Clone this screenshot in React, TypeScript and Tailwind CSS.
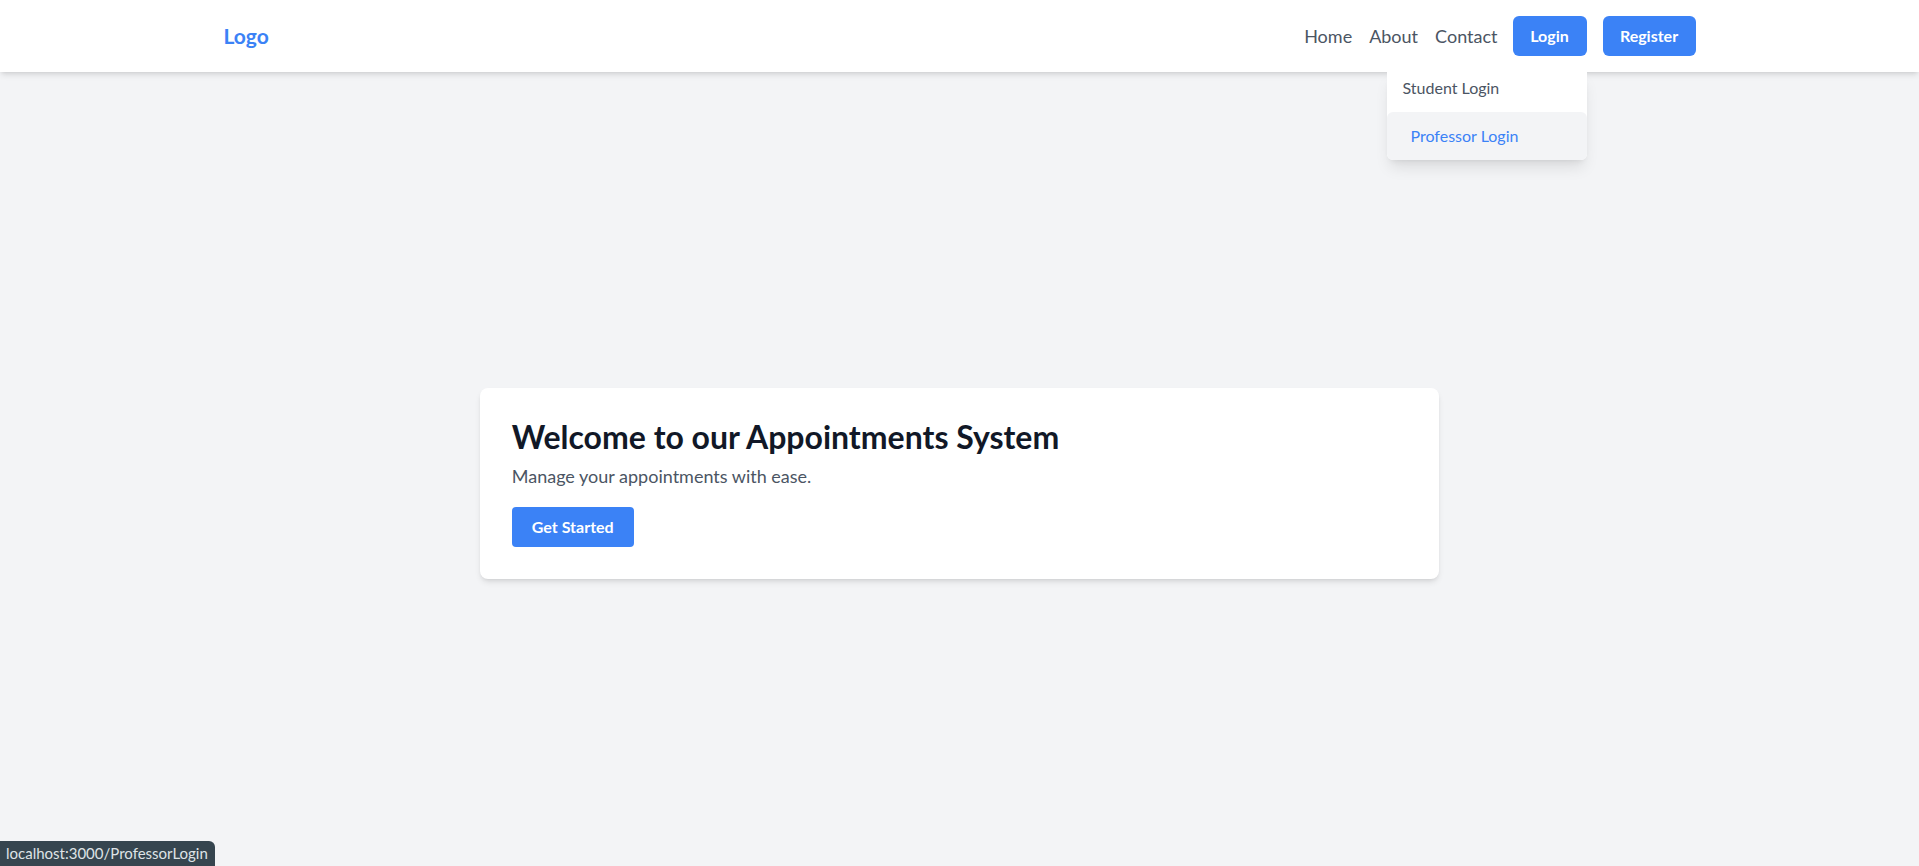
import React from "react";

const font = { fontFamily: "Lato, 'Noto Sans', sans-serif" };

function Header() {
  return (
    <header className="bg-white shadow-md relative z-10">
      <div className="container mx-auto px-8 py-4 flex items-center justify-between">
        <a href="#" className="text-[21px] font-bold text-[#3b82f6] leading-10">
          Logo
        </a>
        <nav className="flex items-center">
          <a href="#" className="text-lg text-[#4b5563] mr-[17px]">Home</a>
          <a href="#" className="text-lg text-[#4b5563] mr-[17px]">About</a>
          <a href="#" className="text-lg text-[#4b5563] mr-[15px]">Contact</a>
          <div className="relative">
            <button className="h-10 w-[74px] rounded-md bg-[#3b82f6] text-white font-bold text-base">
              Login
            </button>
            <div className="absolute right-0 top-[56px] w-[200px] bg-white rounded-b-md shadow-lg">
              <a href="#" className="block px-4 pt-[4px] pb-[12px] text-base leading-6 text-[#4b5563]">
                Student Login
              </a>
              <a href="#" className="block pl-6 pr-4 py-3 text-base leading-6 text-[#3b82f6] bg-[#f3f4f6] rounded-md">
                Professor Login
              </a>
            </div>
          </div>
          <button className="ml-4 h-10 w-[93px] rounded-md bg-[#3b82f6] text-white font-bold text-base">
            Register
          </button>
        </nav>
      </div>
    </header>
  );
}

export default function App() {
  return (
    <div className="min-h-screen bg-[#f3f4f6] text-[#111827]" style={font}>
      <Header />
      <main className="pt-[316px] flex justify-center">
        <div className="w-1/2 bg-white rounded-lg shadow-md pl-8 pr-8 pt-[29px] pb-8">
          <h1 className="text-[32px] leading-10 font-bold text-[#111827]">
            Welcome to our Appointments System
          </h1>
          <p className="mt-[5px] text-lg leading-7 text-[#4b5563]">
            Manage your appointments with ease.
          </p>
          <button className="mt-[17px] h-10 w-[122px] rounded bg-[#3b82f6] text-white font-bold text-base">
            Get Started
          </button>
        </div>
      </main>
      <div className="fixed left-0 bottom-0 h-[25px] w-[215px] bg-[#36454f] rounded-tr-md text-[#dfe3e6] text-[15px] leading-[25px] pl-[6px]">
        localhost:3000/ProfessorLogin
      </div>
    </div>
  );
}
